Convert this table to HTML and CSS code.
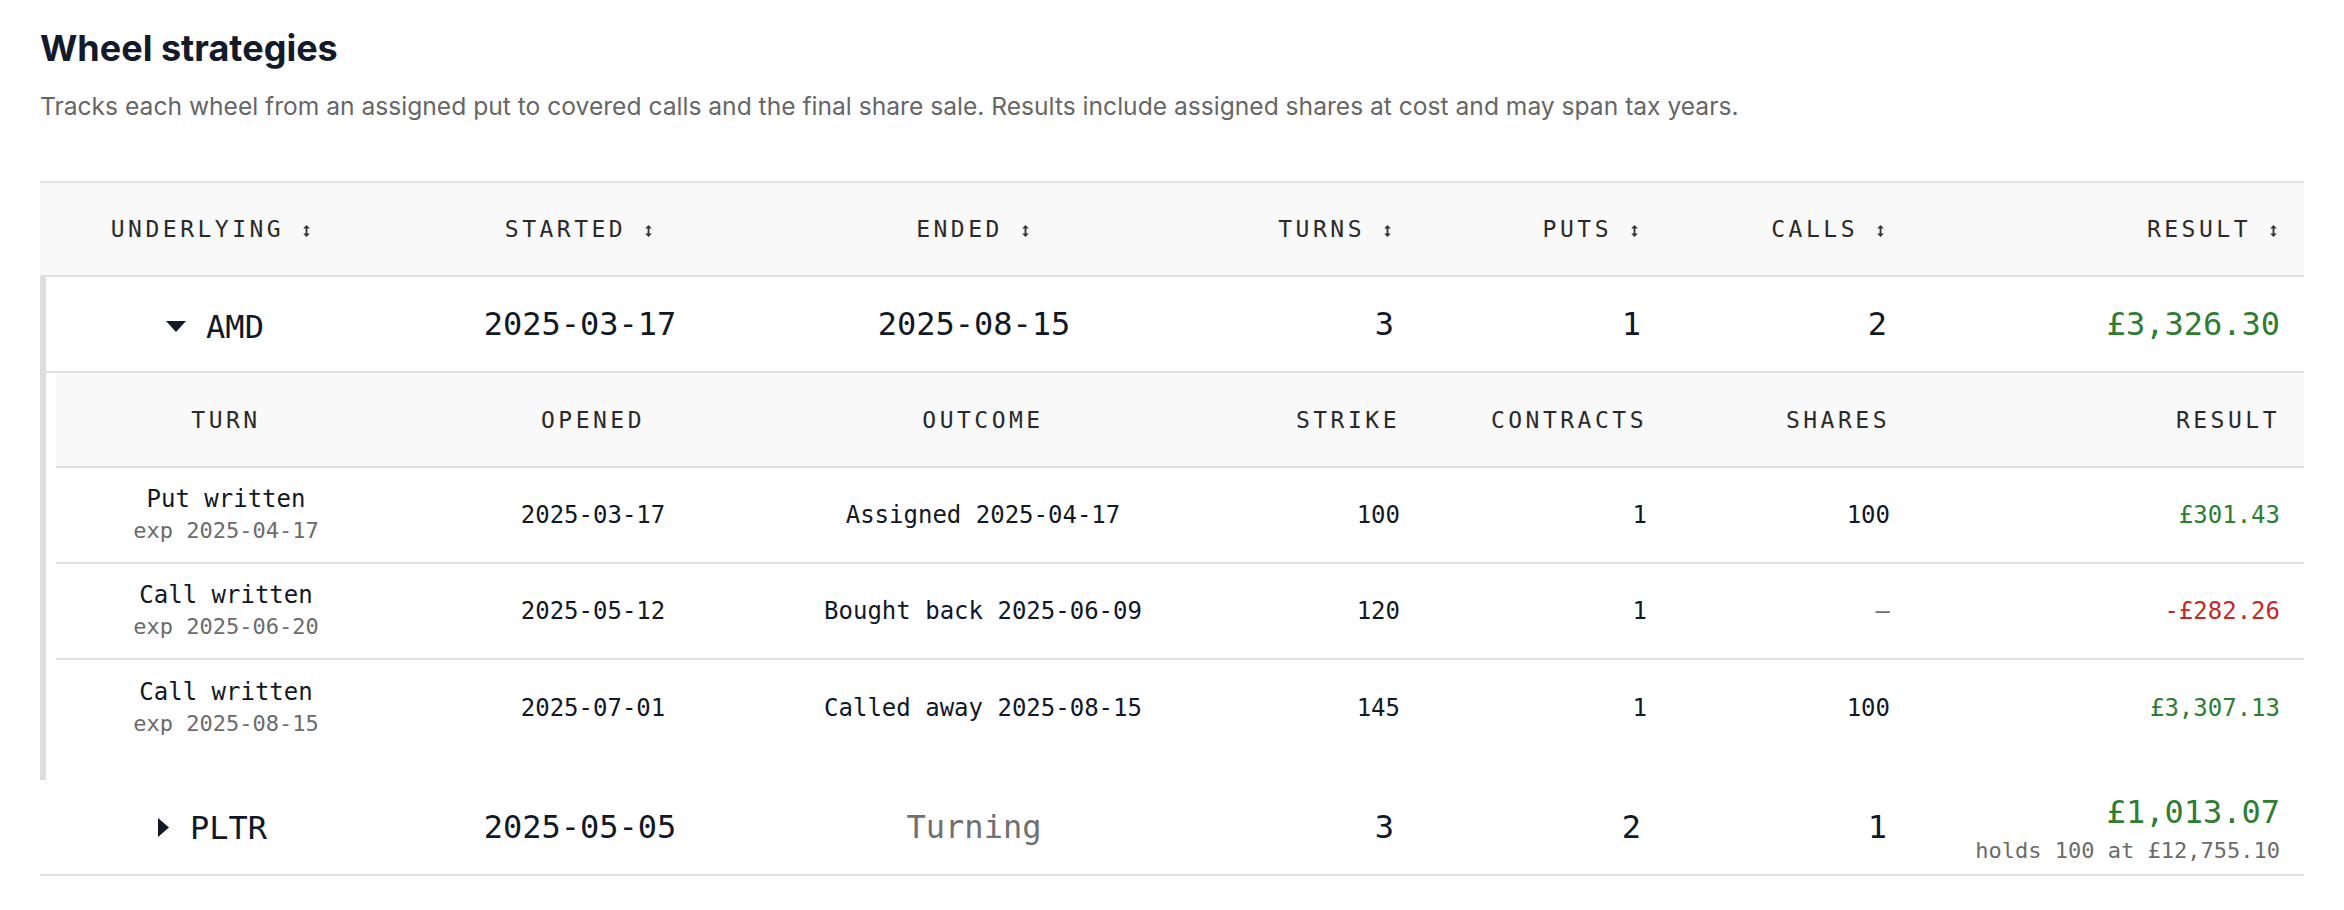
FILE: index.html
```html
<!DOCTYPE html>
<html lang="en">
<head>
<meta charset="utf-8">
<title>Wheel strategies</title>
<link rel="stylesheet" href="styles.css">
</head>
<body>
<main class="page">
  <h1 class="title">Wheel strategies</h1>
  <p class="lede">Tracks each wheel from an assigned put to covered calls and the final share sale. Results include assigned shares at cost and may span tax years.</p>

  <div class="wheels">
    <div class="row head">
      <div class="cell c">UNDERLYING<svg class="sort" viewBox="0 0 7 12"><path d="M3.5 0L6.8 3.6H0.2Z M3.5 12L6.8 8.4H0.2Z"/><rect x="2.6" y="3" width="1.8" height="6"/></svg></div>
      <div class="cell c">STARTED<svg class="sort" viewBox="0 0 7 12"><path d="M3.5 0L6.8 3.6H0.2Z M3.5 12L6.8 8.4H0.2Z"/><rect x="2.6" y="3" width="1.8" height="6"/></svg></div>
      <div class="cell c">ENDED<svg class="sort" viewBox="0 0 7 12"><path d="M3.5 0L6.8 3.6H0.2Z M3.5 12L6.8 8.4H0.2Z"/><rect x="2.6" y="3" width="1.8" height="6"/></svg></div>
      <div class="cell r">TURNS<svg class="sort" viewBox="0 0 7 12"><path d="M3.5 0L6.8 3.6H0.2Z M3.5 12L6.8 8.4H0.2Z"/><rect x="2.6" y="3" width="1.8" height="6"/></svg></div>
      <div class="cell r">PUTS<svg class="sort" viewBox="0 0 7 12"><path d="M3.5 0L6.8 3.6H0.2Z M3.5 12L6.8 8.4H0.2Z"/><rect x="2.6" y="3" width="1.8" height="6"/></svg></div>
      <div class="cell r">CALLS<svg class="sort" viewBox="0 0 7 12"><path d="M3.5 0L6.8 3.6H0.2Z M3.5 12L6.8 8.4H0.2Z"/><rect x="2.6" y="3" width="1.8" height="6"/></svg></div>
      <div class="cell r">RESULT<svg class="sort" viewBox="0 0 7 12"><path d="M3.5 0L6.8 3.6H0.2Z M3.5 12L6.8 8.4H0.2Z"/><rect x="2.6" y="3" width="1.8" height="6"/></svg></div>
    </div>

    <div class="row wheel open">
      <div class="cell c"><span class="sym"><svg class="caret-down" viewBox="0 0 20 11"><path d="M0 0H20L10 11Z"/></svg>AMD</span></div>
      <div class="cell c">2025-03-17</div>
      <div class="cell c">2025-08-15</div>
      <div class="cell r">3</div>
      <div class="cell r">1</div>
      <div class="cell r">2</div>
      <div class="cell r pos">£3,326.30</div>
    </div>

    <div class="detail">
      <div class="row sub-head">
        <div class="cell c">TURN</div>
        <div class="cell c">OPENED</div>
        <div class="cell c">OUTCOME</div>
        <div class="cell r">STRIKE</div>
        <div class="cell r">CONTRACTS</div>
        <div class="cell r">SHARES</div>
        <div class="cell r">RESULT</div>
      </div>
      <div class="row turn">
        <div class="cell c"><div class="leg">Put written</div><div class="note">exp 2025-04-17</div></div>
        <div class="cell c">2025-03-17</div>
        <div class="cell c">Assigned 2025-04-17</div>
        <div class="cell r">100</div>
        <div class="cell r">1</div>
        <div class="cell r">100</div>
        <div class="cell r pos">£301.43</div>
      </div>
      <div class="row turn">
        <div class="cell c"><div class="leg">Call written</div><div class="note">exp 2025-06-20</div></div>
        <div class="cell c">2025-05-12</div>
        <div class="cell c">Bought back 2025-06-09</div>
        <div class="cell r">120</div>
        <div class="cell r">1</div>
        <div class="cell r muted">—</div>
        <div class="cell r neg">-£282.26</div>
      </div>
      <div class="row turn">
        <div class="cell c"><div class="leg">Call written</div><div class="note">exp 2025-08-15</div></div>
        <div class="cell c">2025-07-01</div>
        <div class="cell c">Called away 2025-08-15</div>
        <div class="cell r">145</div>
        <div class="cell r">1</div>
        <div class="cell r">100</div>
        <div class="cell r pos">£3,307.13</div>
      </div>
    </div>

    <div class="row wheel">
      <div class="cell c"><span class="sym"><svg class="caret-right" viewBox="0 0 11 19"><path d="M0 0L11 9.5L0 19Z"/></svg>PLTR</span></div>
      <div class="cell c">2025-05-05</div>
      <div class="cell c muted">Turning</div>
      <div class="cell r">3</div>
      <div class="cell r">2</div>
      <div class="cell r">1</div>
      <div class="cell r"><div class="pos total">£1,013.07</div><div class="note holds">holds 100 at £12,755.10</div></div>
    </div>
  </div>
</main>
</body>
</html>
```

FILE: styles.css
```css
* { box-sizing: border-box; }

body {
  margin: 0;
  background: #ffffff;
  color: #111827;
  font-family: Inter, "Noto Sans", sans-serif;
}

.page {
  padding: 27px 40px 0;
}

.title {
  margin: 0;
  font-size: 36px;
  line-height: 1.2;
  font-weight: 700;
  color: #131a2b;
}

.lede {
  margin: 18px 0 0;
  font-size: 24.6px;
  line-height: 36px;
  color: #666666;
}

.wheels {
  margin-top: 57px;
  border-top: 2px solid #e0e0e0;
  font-family: "DejaVu Sans Mono", "Liberation Mono", monospace;
}

.row {
  display: grid;
  grid-template-columns: 344px 392px 396px 246px 247px 246px 393px;
  align-items: center;
}

.cell {
  padding: 0 24px;
  white-space: nowrap;
}
.cell.c { text-align: center; }
.cell.r { text-align: right; }

/* top-level header */
.head {
  min-height: 94px;
  background: #f9f9f9;
  border-bottom: 2px solid #e0e0e0;
  font-size: 23px;
  line-height: 28px;
  letter-spacing: 3.5px;
  color: #2a2a2a;
}

.sort {
  width: 7px;
  height: 12px;
  margin-left: 19px;
  margin-right: 3px;
  fill: #333333;
  vertical-align: 0;
}

/* wheel rows */
.wheel {
  min-height: 96px;
  border-bottom: 2px solid #e0e0e0;
  font-size: 32px;
  line-height: 38px;
}
.wheel.open {
  border-left: 6px solid #dddddd;
  grid-template-columns: 338px 392px 396px 246px 247px 246px 393px;
}

.sym {
  display: inline-flex;
  align-items: center;
  gap: 20px;
}
.caret-down { width: 20px; height: 11px; fill: #111827; }
.caret-right { width: 13px; height: 19px; fill: #111827; }

.pos { color: #2e7d32; }
.neg { color: #c62828; }
.muted { color: #707070; }

.total {
  line-height: 46px;
}
.holds {
  line-height: 33px;
}

/* expanded detail */
.detail {
  border-left: 6px solid #dddddd;
  padding: 1px 0 24px 10px;
}
.detail .row {
  grid-template-columns: 340px 394px 386px 248px 247px 243px 390px;
}

.sub-head {
  min-height: 94px;
  background: #f9f9f9;
  border-bottom: 2px solid #e0e0e0;
  font-size: 23px;
  line-height: 28px;
  letter-spacing: 3.5px;
  color: #2a2a2a;
}

.turn {
  min-height: 96px;
  border-bottom: 2px solid #e0e0e0;
  font-size: 24px;
  line-height: 31px;
}
.turn:last-child { border-bottom: 0; }

.leg { line-height: 31px; }
.note {
  font-size: 22px;
  line-height: 31px;
  color: #6b6b6b;
}
```
